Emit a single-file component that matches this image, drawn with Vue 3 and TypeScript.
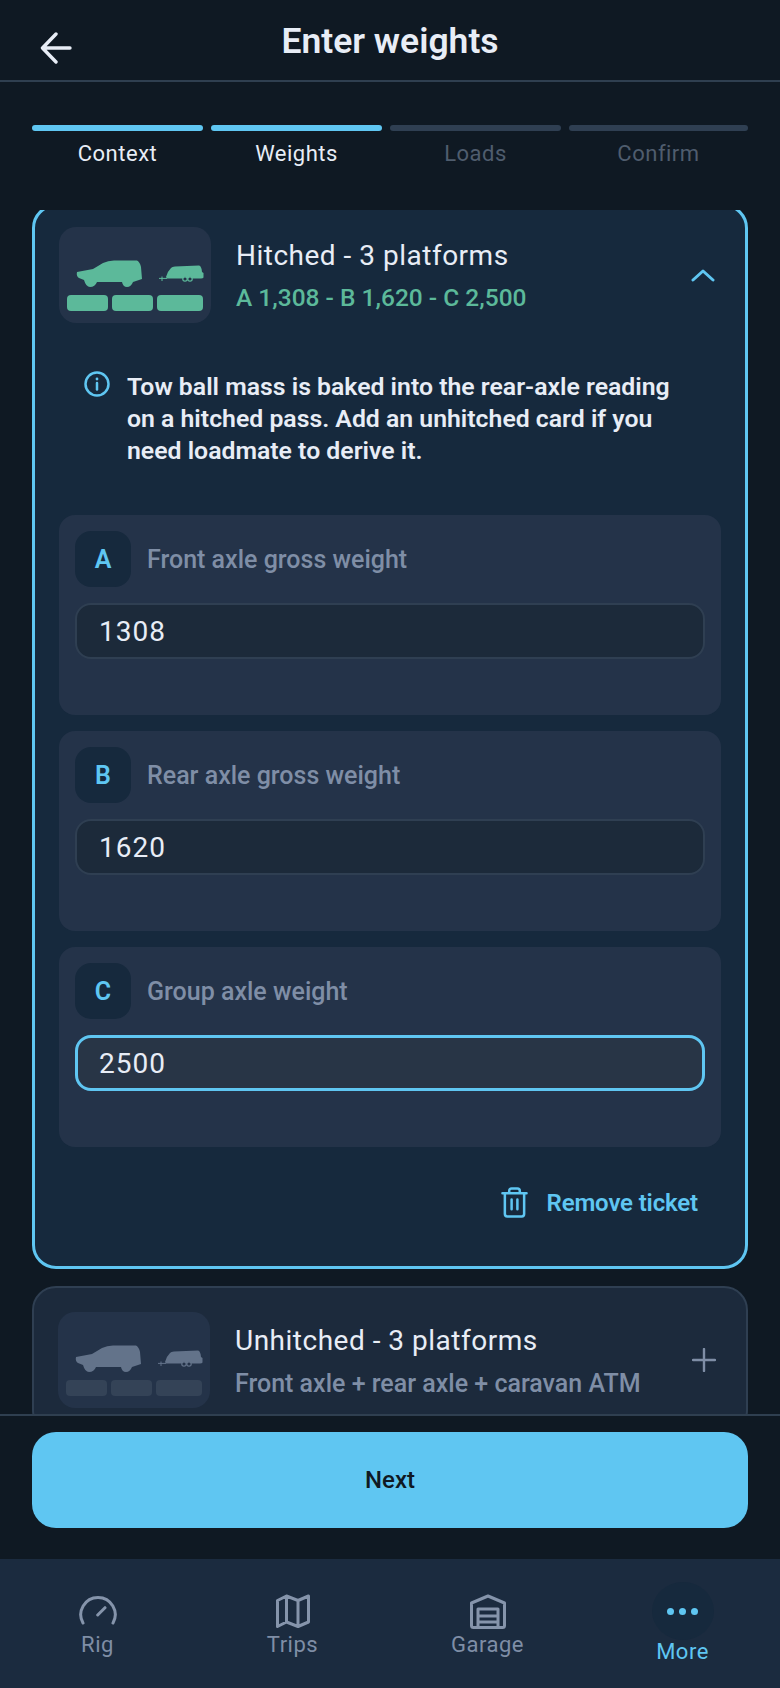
<script setup lang="ts">
const steps = [
  { label: "Context", done: true },
  { label: "Weights", done: true },
  { label: "Loads", done: false },
  { label: "Confirm", done: false },
];

const platforms = [
  { key: "A", label: "Front axle gross weight", value: "1308", focused: false },
  { key: "B", label: "Rear axle gross weight", value: "1620", focused: false },
  { key: "C", label: "Group axle weight", value: "2500", focused: true },
];

const car =
  "M18 45 L34 42 Q39 39 44 36 Q49 33.5 55 33.5 L78 33.5 Q81 35 82 40 L83 52 L74 55 Q72 60 68 60 Q64 60 63 55 L38 55 Q36 60 31 60 Q27 60 25 53 L20 51 Q17 49 18 45 Z";
const caravan =
  "M107 50 Q108 45 112 41 Q113 39.5 116 39.5 L140 38.5 Q142.5 39 143 45 L144.5 46 V50.5 Q144 51.5 142 51.5 L108 51.5 Z";
</script>

<template>
  <div class="page">
    <header class="topbar">
      <svg class="back" viewBox="0 0 32 32" fill="none" stroke="#e8edf6" stroke-width="3.4" stroke-linecap="round" stroke-linejoin="round">
        <path d="M30 16 H3 M16 2 L2.5 16 L16 30" />
      </svg>
      <h1>Enter weights</h1>
    </header>

    <div class="steps">
      <div v-for="step in steps" :key="step.label" :class="['step', { done: step.done }]">
        <span class="bar"></span>
        <span class="step-label">{{ step.label }}</span>
      </div>
    </div>

    <main class="scroll">
      <section class="card open">
        <div class="card-head">
          <svg class="thumb" viewBox="0 0 152 96">
            <rect width="152" height="96" rx="17" fill="#243349" />
            <g fill="#5cb99a">
              <path :d="car" />
              <path :d="caravan" />
              <rect x="8" y="68" width="41" height="16" rx="4" />
              <rect x="53" y="68" width="41" height="16" rx="4" />
              <rect x="98" y="68" width="46" height="16" rx="4" />
              <path d="M100 51.4 H108 M103 49.5 V54" stroke="#5cb99a" stroke-width="1" />
              <circle cx="126" cy="52" r="2.2" fill="#243349" stroke="#5cb99a" stroke-width="1.2" />
              <circle cx="131" cy="52" r="2.2" fill="#243349" stroke="#5cb99a" stroke-width="1.2" />
            </g>
          </svg>
          <div class="card-text">
            <div class="card-title">Hitched - 3 platforms</div>
            <div class="card-sub green">A 1,308 - B 1,620 - C 2,500</div>
          </div>
          <svg class="chevron" viewBox="0 0 24 14" fill="none" stroke="#5fc6f2" stroke-width="3" stroke-linecap="round" stroke-linejoin="round">
            <path d="M2 12 L12 3 L22 12" />
          </svg>
        </div>

        <div class="info">
          <svg class="info-icon" viewBox="0 0 26 26" fill="none" stroke="#5fc6f2" stroke-width="2.5" stroke-linecap="round">
            <circle cx="13" cy="13" r="11.5" />
            <path d="M13 12 V18.5" />
            <circle cx="13" cy="8" r="0.7" fill="#5fc6f2" stroke-width="1.4" />
          </svg>
          <p>Tow ball mass is baked into the rear-axle reading on a hitched pass. Add an unhitched card if you need loadmate to derive it.</p>
        </div>

        <div class="platforms">
          <div v-for="p in platforms" :key="p.key" class="platform">
            <div class="platform-head">
              <span class="badge">{{ p.key }}</span>
              <span class="platform-label">{{ p.label }}</span>
            </div>
            <input :class="['weight', { focused: p.focused }]" type="text" :value="p.value" />
          </div>
        </div>

        <div class="remove">
          <svg class="trash" viewBox="0 0 28 32" fill="none" stroke="#5fc6f2" stroke-width="2.6" stroke-linecap="round" stroke-linejoin="round">
            <path d="M1.5 6.5 H26.5 M8.5 6.5 V4 Q8.5 1.5 11 1.5 H17 Q19.5 1.5 19.5 4 V6.5 M4 6.5 V28 Q4 30.5 6.5 30.5 H21.5 Q24 30.5 24 28 V6.5 M11 13 V23 M17 13 V23" />
          </svg>
          <span>Remove ticket</span>
        </div>
      </section>

      <section class="card closed">
        <div class="card-head">
          <svg class="thumb" viewBox="0 0 152 96">
            <rect width="152" height="96" rx="17" fill="#243349" />
            <g fill="#63738a">
              <path :d="car" />
              <path :d="caravan" />
              <path d="M100 51.4 H108 M103 49.5 V54" stroke="#63738a" stroke-width="1" />
              <circle cx="126" cy="52" r="2.2" fill="#243349" stroke="#63738a" stroke-width="1.2" />
              <circle cx="131" cy="52" r="2.2" fill="#243349" stroke="#63738a" stroke-width="1.2" />
            </g>
            <g fill="#344357">
              <rect x="8" y="68" width="41" height="16" rx="4" />
              <rect x="53" y="68" width="41" height="16" rx="4" />
              <rect x="98" y="68" width="46" height="16" rx="4" />
            </g>
          </svg>
          <div class="card-text wide">
            <div class="card-title">Unhitched - 3 platforms</div>
            <div class="card-sub">Front axle + rear axle + caravan ATM</div>
          </div>
          <svg class="plus" viewBox="0 0 24 24" fill="none" stroke="#7f8ea6" stroke-width="2.4" stroke-linecap="round">
            <path d="M12 1 V23 M1 12 H23" />
          </svg>
        </div>
      </section>
    </main>

    <div class="action">
      <button class="next">Next</button>
    </div>

    <nav class="tabs">
      <div class="tab">
        <svg viewBox="0 0 40 40" fill="none" stroke="#8594ab" stroke-width="3" stroke-linecap="round" stroke-linejoin="round">
          <path d="M5 30 A17.2 17.2 0 1 1 35 30 M19.7 22 L27 14.7" />
        </svg>
        <span>Rig</span>
      </div>
      <div class="tab">
        <svg viewBox="0 0 40 40" fill="none" stroke="#8594ab" stroke-width="3" stroke-linecap="round" stroke-linejoin="round">
          <path d="M4.5 7.5 L13.5 3 L25 7.5 L35.5 3 V29 L25 33.5 L13.5 29 L4.5 33.5 Z M13.5 3 V29 M25 7.5 V33.5" />
        </svg>
        <span>Trips</span>
      </div>
      <div class="tab">
        <svg viewBox="0 0 40 40" fill="none" stroke="#8594ab" stroke-width="3" stroke-linecap="round" stroke-linejoin="round">
          <path d="M3.5 10 L20 3 L36.5 10 V32.5 Q36.5 34.5 34.5 34.5 H5.5 Q3.5 34.5 3.5 32.5 Z M10 34.5 V16 H30 V34.5 M10 23 H30 M10 29 H30" />
        </svg>
        <span>Garage</span>
      </div>
      <div class="tab active">
        <div class="pill">
          <i></i><i></i><i></i>
        </div>
        <span>More</span>
      </div>
    </nav>
  </div>
</template>

<style scoped>
.page {
  width: 780px;
  height: 1688px;
  display: flex;
  flex-direction: column;
  background: #0f1923;
  font-family: Roboto, "Noto Sans", sans-serif;
  color: #e8edf6;
  overflow: hidden;
}

.topbar {
  height: 80px;
  flex: none;
  border-bottom: 2px solid #2f3f50;
  display: flex;
  justify-content: center;
  position: relative;
}
.back {
  position: absolute;
  left: 40px;
  top: 32px;
  width: 32px;
  height: 32px;
}
.topbar h1 {
  margin: 19px 0 0;
  font-size: 35.5px;
  line-height: 44px;
  font-weight: 600;
}

.steps {
  flex: none;
  height: 128px;
  box-sizing: border-box;
  padding: 43px 32px 0;
  display: grid;
  grid-template-columns: 171px 171px 171px 1fr;
  column-gap: 8px;
}
.step {
  display: flex;
  flex-direction: column;
  align-items: center;
}
.bar {
  width: 100%;
  height: 6px;
  border-radius: 3px;
  background: #2f3f52;
}
.step.done .bar {
  background: #5fc6f2;
}
.step-label {
  margin-top: 8px;
  font-size: 22px;
  line-height: 30px;
  letter-spacing: 0.5px;
  color: #4f5d6e;
}
.step.done .step-label {
  color: #e8edf6;
}

.scroll {
  flex: 1;
  min-height: 0;
  overflow: hidden;
  padding: 0 32px;
}
.card {
  box-sizing: border-box;
  border-radius: 24px;
}
.card.open {
  margin-top: -6px;
  height: 1065px;
  padding: 20px 24px 0;
  background: #16293d;
  border: 3px solid #5fc6f2;
}
.card.closed {
  margin-top: 17px;
  padding: 24px 24px;
  background: #1c2a3c;
  border: 2px solid #2f3f52;
}

.card-head {
  display: flex;
  align-items: center;
}
.thumb {
  width: 152px;
  height: 96px;
  flex: none;
}
.card-text {
  flex: 1;
  margin-left: 25px;
  padding-top: 2px;
}
.card-title {
  font-size: 28px;
  line-height: 36px;
  letter-spacing: 0.5px;
}
.card-sub {
  margin-top: 8px;
  font-size: 24px;
  line-height: 32px;
  font-weight: 500;
  color: #7f8ea6;
}
.card-sub.green {
  font-size: 24.5px;
  color: #5cb99a;
}
.card-text.wide {
  padding-top: 3px;
}
.card-text.wide .card-sub {
  margin-top: 9px;
  font-size: 25px;
}
.chevron {
  width: 24px;
  height: 14px;
  flex: none;
  margin-right: 6px;
}
.plus {
  width: 24px;
  height: 24px;
  flex: none;
  margin-right: 6px;
}

.info {
  margin: 48px 26px 0 25px;
  display: flex;
  gap: 17px;
}
.info-icon {
  width: 26px;
  height: 26px;
  flex: none;
}
.info p {
  margin: 0;
  font-size: 24.8px;
  line-height: 32px;
  font-weight: 600;
}

.platforms {
  margin-top: 48px;
  display: flex;
  flex-direction: column;
  gap: 16px;
}
.platform {
  height: 200px;
  box-sizing: border-box;
  padding: 16px;
  border-radius: 16px;
  background: #243349;
}
.platform-head {
  display: flex;
  align-items: center;
  gap: 16px;
}
.badge {
  width: 56px;
  height: 56px;
  flex: none;
  border-radius: 16px;
  background: #16293d;
  color: #5fc6f2;
  font-size: 25px;
  font-weight: 600;
  display: flex;
  align-items: center;
  justify-content: center;
}
.platform-label {
  font-size: 25px;
  font-weight: 500;
  color: #7f8ea6;
}
.weight {
  display: block;
  width: 100%;
  box-sizing: border-box;
  height: 56px;
  margin-top: 16px;
  padding: 0 22px;
  border: 2px solid #2f3f52;
  border-radius: 16px;
  background: #1c2a3a;
  color: #e8edf6;
  font-family: inherit;
  font-size: 28px;
  letter-spacing: 1px;
  outline: none;
}
.weight.focused {
  border: 3px solid #5fc6f2;
  background: #283546;
  padding: 0 21px;
}

.remove {
  margin-top: 40px;
  margin-right: 23px;
  display: flex;
  justify-content: flex-end;
  align-items: center;
  gap: 19px;
  color: #5fc6f2;
  font-size: 24px;
  letter-spacing: -0.15px;
  font-weight: 600;
}
.trash {
  width: 27px;
  height: 31px;
}

.action {
  flex: none;
  height: 145px;
  box-sizing: border-box;
  padding: 16px 32px 0;
  border-top: 2px solid #2f3f50;
  background: #0f1923;
  position: relative;
}
.next {
  width: 100%;
  height: 96px;
  border: none;
  border-radius: 24px;
  background: #5fc6f2;
  color: #0f1923;
  font-family: inherit;
  font-size: 24px;
  font-weight: 500;
}

.tabs {
  flex: none;
  height: 129px;
  background: #1b2b3f;
  display: grid;
  grid-template-columns: repeat(4, 1fr);
}
.tab {
  display: flex;
  flex-direction: column;
  align-items: center;
  padding-top: 34px;
  color: #7f8ea6;
  font-size: 22px;
  letter-spacing: 0.5px;
}
.tab svg {
  width: 40px;
  height: 40px;
}
.tab span {
  line-height: 24px;
}
.tab.active {
  color: #5fc6f2;
  padding-top: 23px;
}
.pill {
  width: 62px;
  height: 58px;
  border-radius: 50%;
  background: #16293d;
  display: flex;
  align-items: center;
  justify-content: center;
  gap: 5px;
}
.pill i {
  width: 7px;
  height: 7px;
  border-radius: 50%;
  background: #5fc6f2;
}
</style>

<style>
html,
body {
  background: #0f1923;
}
</style>
